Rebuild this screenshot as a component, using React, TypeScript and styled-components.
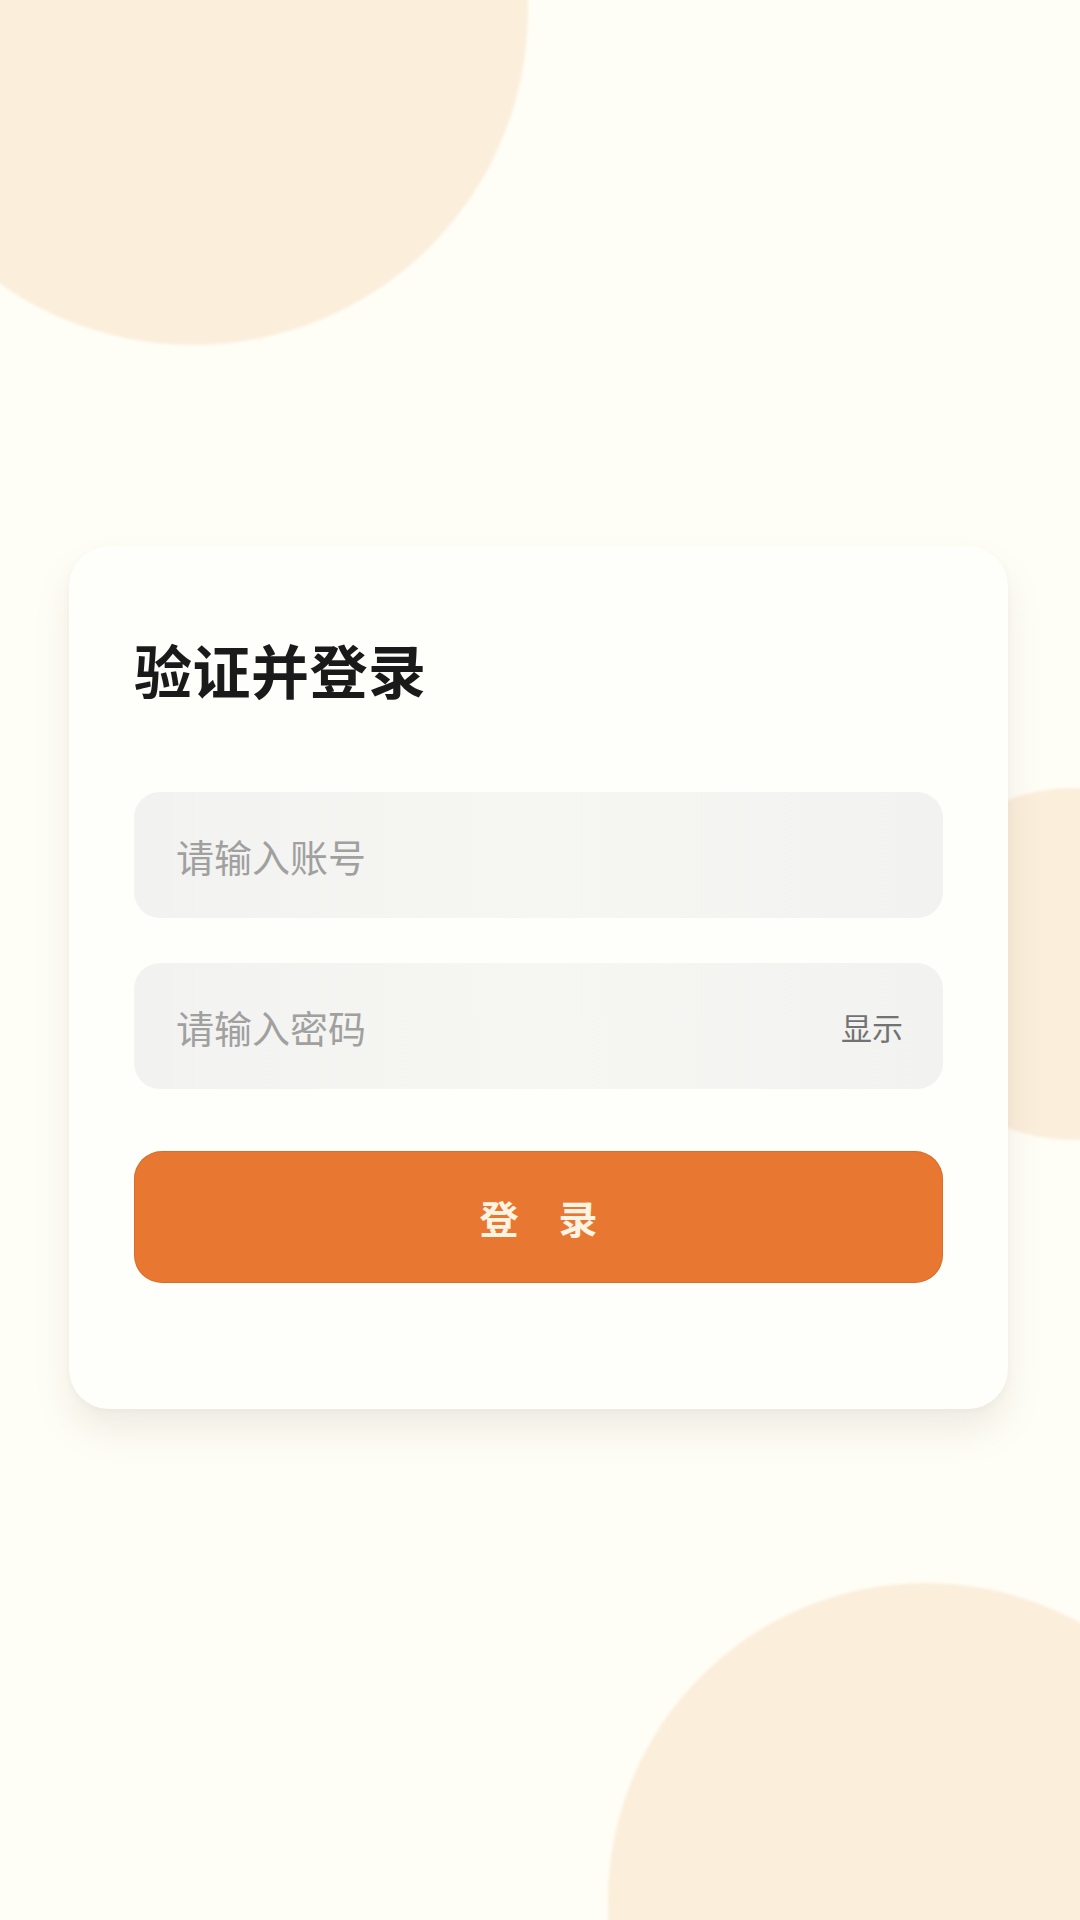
import styled, {createGlobalStyle} from "styled-components";
import {useState} from "react";

const FONT = `"Noto Sans CJK SC", "Noto Sans", sans-serif`;

const GlobalStyle = createGlobalStyle`
  html, body {
    margin: 0;
    padding: 0;
    background: #fffef6;
  }
  * {
    box-sizing: border-box;
  }
`;

const Page = styled.div`
  position: relative;
  width: 1080px;
  height: 1920px;
  overflow: hidden;
  background: #fffef6;
  font-family: ${FONT};
  display: flex;
  flex-direction: column;
  align-items: flex-start;
`;

const Blob = styled.div<{ $size: number; $left: number; $top: number }>`
  position: absolute;
  left: ${p => p.$left}px;
  top: ${p => p.$top}px;
  width: ${p => p.$size}px;
  height: ${p => p.$size}px;
  border-radius: 50%;
  background: #fbeedb;
  filter: blur(1.5px);
  z-index: 0;
`;

const Card = styled.form`
  position: relative;
  z-index: 1;
  margin: 546px 0 0 69px;
  width: 939px;
  padding: 87px 65px 126px 65px;
  background: #fefefa;
  border-radius: 40px;
  box-shadow: 0 22px 36px rgba(120, 110, 90, 0.12), 0 2px 6px rgba(120, 110, 90, 0.05);
  display: flex;
  flex-direction: column;
`;

const Title = styled.h1`
  margin: 0 0 86px 0;
  font-size: 58px;
  line-height: 73px;
  font-weight: 700;
  color: #1a1a1a;
  letter-spacing: 0.5px;
`;

const Field = styled.div<{ $gap: number }>`
  display: flex;
  align-items: center;
  height: 126px;
  margin-bottom: ${p => p.$gap}px;
  padding: 0 40px 0 42px;
  border-radius: 26px;
  background: linear-gradient(90deg, #f2f2f0 0%, #f6f6f3 50%, #f2f2f0 100%);
`;

const Input = styled.input`
  flex: 1;
  min-width: 0;
  border: none;
  outline: none;
  background: transparent;
  font-family: ${FONT};
  font-size: 38px;
  color: #333;
  padding: 0;

  &::placeholder {
    color: #a0a0a0;
  }
`;

const Toggle = styled.button`
  border: none;
  background: transparent;
  padding: 0;
  font-family: ${FONT};
  font-size: 31px;
  color: #727272;
  cursor: pointer;
`;

const Submit = styled.button`
  height: 132px;
  border: none;
  border-radius: 28px;
  background: #e87731;
  color: #fff4e2;
  font-family: ${FONT};
  font-size: 39px;
  font-weight: 700;
  letter-spacing: 40px;
  text-indent: 40px;
  cursor: pointer;
  box-shadow: inset 0 0 0 1px rgba(200, 90, 30, 0.35);
`;

export default function App() {
    const [showPwd, setShowPwd] = useState(false);

    return (
        <>
            <GlobalStyle/>
            <Page>
                <Blob $size={670} $left={-142} $top={-325}/>
                <Blob $size={352} $left={896} $top={788}/>
                <Blob $size={636} $left={608} $top={1583}/>
                <Card onSubmit={e => e.preventDefault()}>
                    <Title>验证并登录</Title>
                    <Field $gap={45}>
                        <Input placeholder="请输入账号"/>
                    </Field>
                    <Field $gap={62}>
                        <Input type={showPwd ? "text" : "password"} placeholder="请输入密码"/>
                        <Toggle type="button" onClick={() => setShowPwd(!showPwd)}>
                            {showPwd ? "隐藏" : "显示"}
                        </Toggle>
                    </Field>
                    <Submit type="submit">登录</Submit>
                </Card>
            </Page>
        </>
    );
}
